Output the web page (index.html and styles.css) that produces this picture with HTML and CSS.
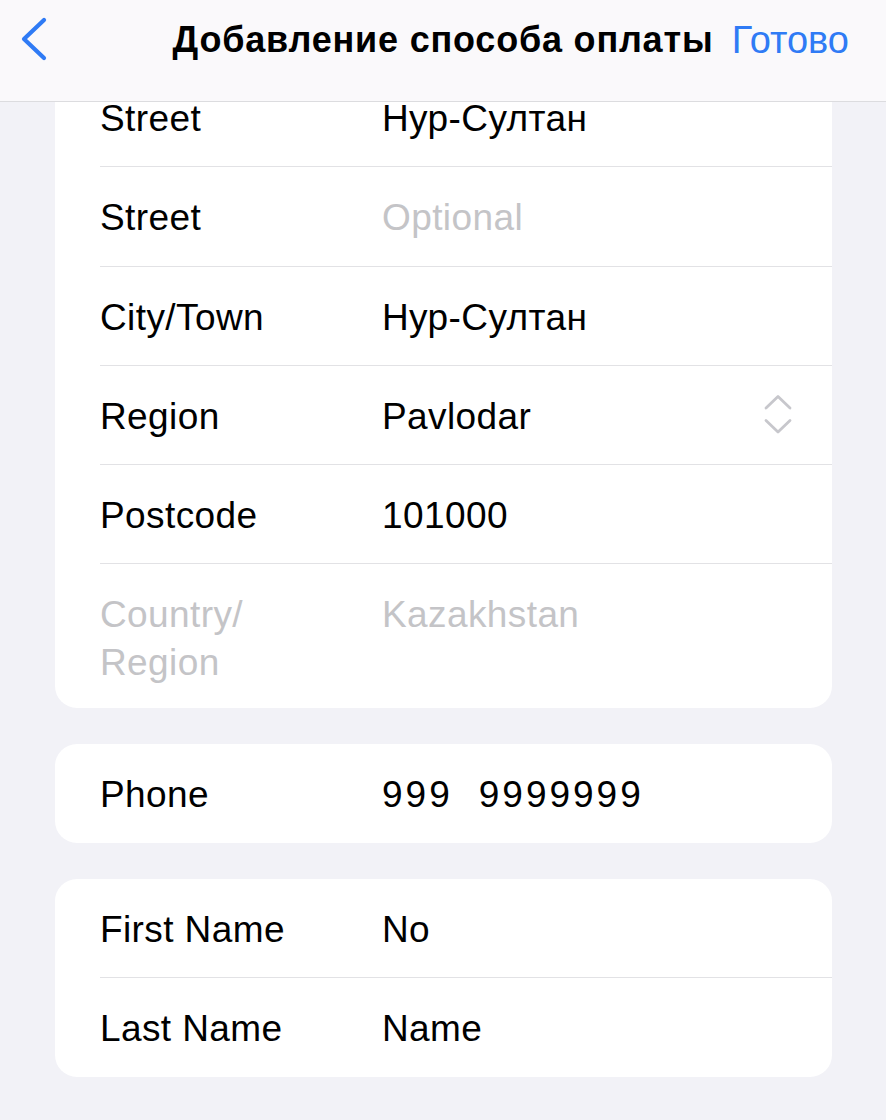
FILE: index.html
```html
<!DOCTYPE html>
<html lang="ru">
<head>
<meta charset="utf-8">
<title>Добавление способа оплаты</title>
<link rel="stylesheet" href="styles.css">
</head>
<body>
<header class="navbar">
  <div class="nav-left">
    <svg class="back-icon" width="30" height="44" viewBox="0 0 30 44" aria-hidden="true">
      <path d="M24 3 L4 22 L24 41" fill="none" stroke="#2f7bf5" stroke-width="4.2" stroke-linecap="round" stroke-linejoin="round"/>
    </svg>
  </div>
  <h1 class="nav-title">Добавление способа оплаты</h1>
  <div class="nav-right">Готово</div>
</header>

<main class="content">
  <section class="card card-address">
    <div class="row"><span class="label">Street</span><span class="value">Нур-Султан</span></div>
    <div class="row"><span class="label">Street</span><span class="value placeholder">Optional</span></div>
    <div class="row"><span class="label">City/Town</span><span class="value">Нур-Султан</span></div>
    <div class="row row-picker"><span class="label">Region</span><span class="value">Pavlodar</span>
      <svg class="updown" width="30" height="42" viewBox="0 0 30 42" aria-hidden="true">
        <path d="M3 14 L15 2.5 L27 14" fill="none" stroke="#c7c7cc" stroke-width="2.8" stroke-linecap="round" stroke-linejoin="round"/>
        <path d="M3 26.5 L15 38 L27 26.5" fill="none" stroke="#c7c7cc" stroke-width="2.8" stroke-linecap="round" stroke-linejoin="round"/>
      </svg>
    </div>
    <div class="row"><span class="label">Postcode</span><span class="value">101000</span></div>
    <div class="row row-tall"><span class="label placeholder">Country/<br>Region</span><span class="value placeholder">Kazakhstan</span></div>
  </section>

  <section class="card">
    <div class="row"><span class="label">Phone</span><span class="value phone"><span>999</span><span>9999999</span></span></div>
  </section>

  <section class="card">
    <div class="row"><span class="label">First Name</span><span class="value">No</span></div>
    <div class="row row-last"><span class="label">Last Name</span><span class="value">Name</span></div>
  </section>
</main>
</body>
</html>
```

FILE: styles.css
```css
* { box-sizing: border-box; }

html, body {
  margin: 0;
  padding: 0;
  background: #f2f2f7;
  font-family: "Liberation Sans", Arial, "DejaVu Sans", sans-serif;
  color: #000;
  -webkit-font-smoothing: antialiased;
}

.navbar {
  position: fixed;
  top: 0;
  left: 0;
  right: 0;
  height: 102px;
  background: #faf9fb;
  border-bottom: 1px solid #dcdcdf;
  display: flex;
  align-items: flex-start;
  z-index: 10;
}

.nav-left {
  position: absolute;
  left: 20px;
  top: 17px;
}

.back-icon { display: block; }

.nav-title {
  margin: 0 auto;
  padding-top: 18px;
  font-size: 36px;
  line-height: 44px;
  font-weight: 700;
  letter-spacing: 0.8px;
}

.nav-right {
  position: absolute;
  right: 37px;
  top: 18px;
  font-size: 38px;
  line-height: 44px;
  color: #2f7bf5;
}

.content {
  padding: 68px 54px 40px 55px;
  display: flex;
  flex-direction: column;
  gap: 36px;
}

.card {
  background: #fff;
  border-radius: 22px;
  overflow: hidden;
}

.card-address {
  border-top-left-radius: 0;
  border-top-right-radius: 0;
}

.row {
  margin-left: 45px;
  display: flex;
  align-items: flex-start;
  padding: 27px 0 23.25px;
  border-bottom: 1px solid #e2e2e5;
  font-size: 37px;
  line-height: 48px;
  letter-spacing: 0.4px;
}

.row:last-child { border-bottom: none; }

.row-tall { padding-bottom: 21px; }

.row-last { padding-bottom: 24.5px; }

.label {
  flex: 0 0 282px;
}

.value { flex: 1 1 auto; }

.placeholder { color: #c4c4c7; }

.phone {
  display: flex;
  gap: 26px;
  letter-spacing: 3px;
}

.updown {
  flex: 0 0 auto;
  margin: 1px 39px 0 0;
}
```
